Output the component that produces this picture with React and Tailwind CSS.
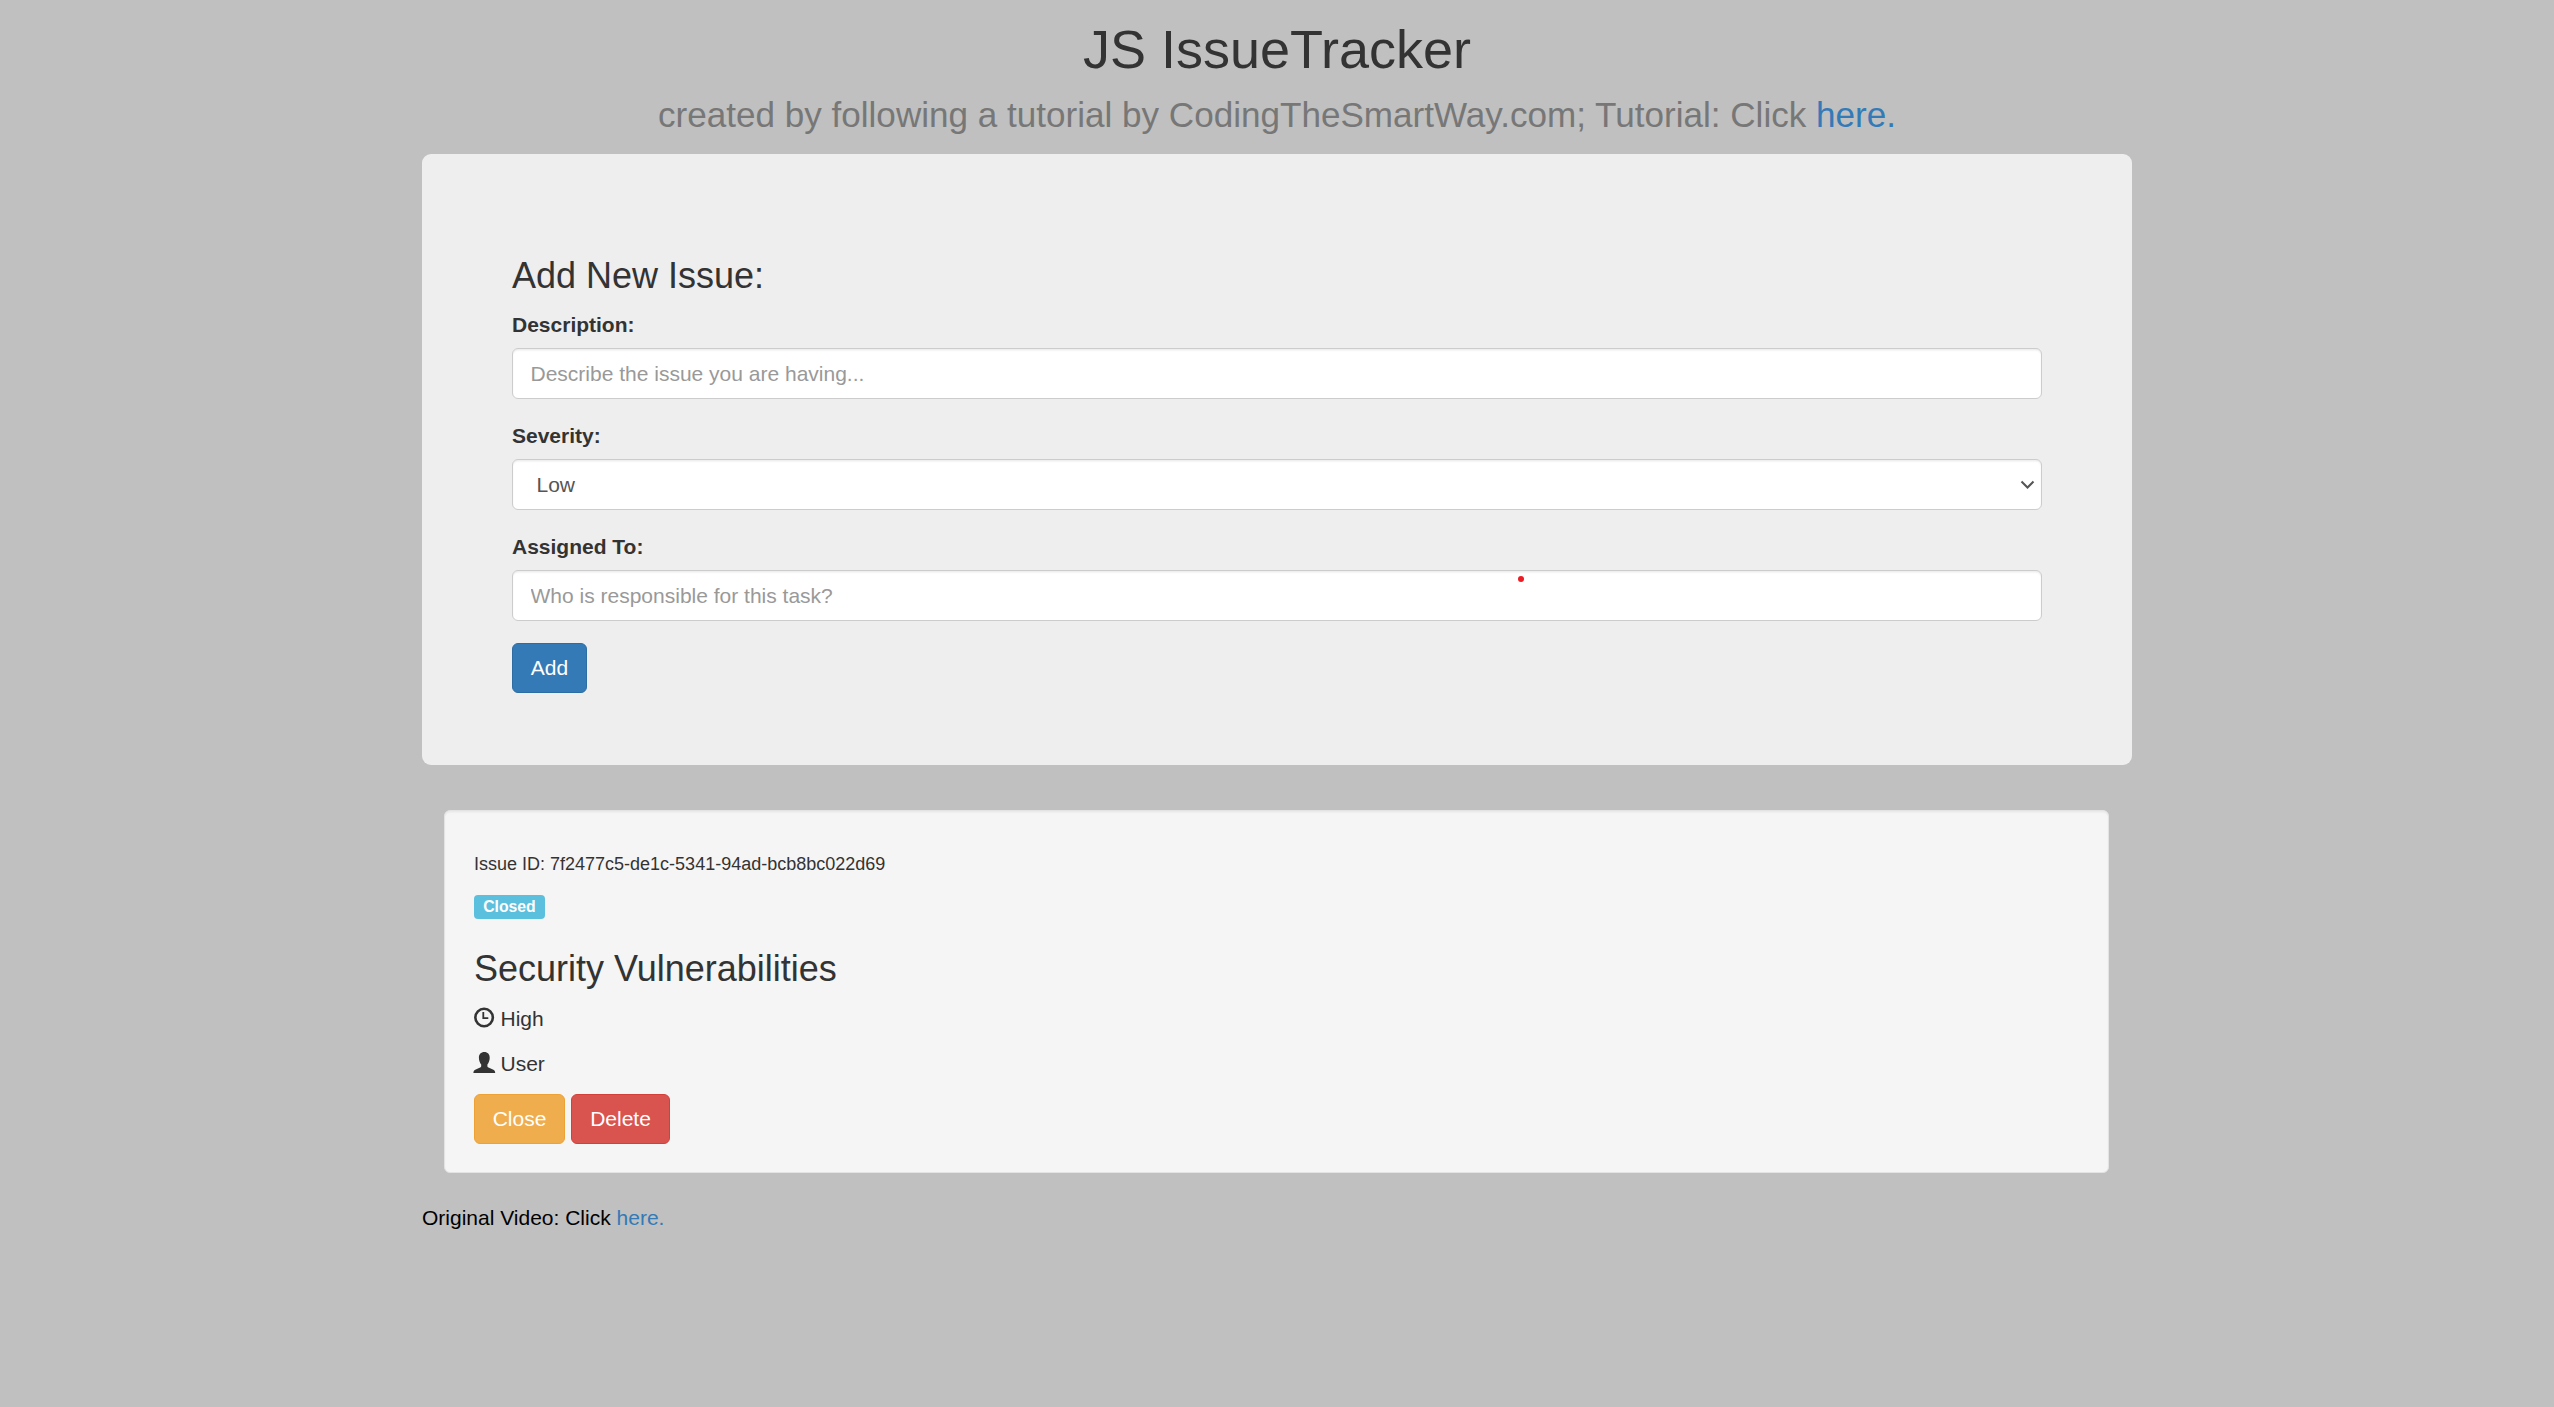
function Field({ label, children }) {
  return (
    <div className="mb-[22.5px]">
      <label className="mb-[8.5px] block h-[29px] leading-[28px] font-bold">{label}</label>
      {children}
    </div>
  );
}

const control =
  "block h-[51px] w-full rounded-[6px] border border-[#ccc] bg-white px-[17.500px] py-[9px] text-[21px] leading-[30px] text-[#555] shadow-[inset_0_1.5px_1.5px_rgba(0,0,0,0.075)] placeholder:text-[#999] placeholder:opacity-100 outline-none";

const button = "h-[50px] rounded-[6px] border text-center leading-[30px] text-white";

function ClockIcon() {
  return (
    <svg className="mt-[3px] h-[21px] w-[21px]" viewBox="0 0 21 21" fill="none" stroke="#333">
      <circle cx="10.1" cy="10.5" r="8.75" strokeWidth="2.6" />
      <path d="M9.300 5v6.200h5" strokeWidth="1.8" />
    </svg>
  );
}

function UserIcon() {
  return (
    <svg className="mt-[3px] h-[21px] w-[21px] overflow-visible" viewBox="0 0 21 21" fill="#333">
      <path d="M10.300 0c3.400 0 5.400 2.200 5.400 5.800 0 2.900-1 5.200-2.300 6.600v1.500c0 .8.300 1.200 1.100 1.600l4.900 2.200c1.200.6 1.700 1.500 1.800 3.200H-.6c.1-1.700.6-2.600 1.800-3.200l4.900-2.200c.8-.4 1.100-.8 1.100-1.600v-1.500C5.900 11 4.900 8.700 4.900 5.800 4.900 2.200 6.900 0 10.300 0z" />
    </svg>
  );
}

export default function App() {
  return (
    <div className="min-h-screen bg-[#c0c0c0] pt-[20px] font-['Liberation_Sans',Arial,sans-serif] text-[21px] leading-[30px] text-[#333]">
      <main className="mx-auto w-[1710px]">
        <h1 className="mb-[15px] text-center text-[54px] leading-[59.5px]">
          <span className="block">JS IssueTracker</span>
          <small className="mt-[6px] block h-[53.5px] text-[35.1px] leading-[58px] text-[#777]">
            created by following a tutorial by CodingTheSmartWay.com; Tutorial: Click{" "}
            <a href="#" className="text-[#337ab7]">here.</a>
          </small>
        </h1>

        <section className="relative h-[611px] rounded-[9px] bg-[#eee] px-[90px] pt-[102px]">
          <h3 className="mb-[15px] text-[36px] leading-[39.6px]">Add New Issue:</h3>
          <form>
            <Field label="Description:">
              <input type="text" className={control} placeholder="Describe the issue you are having..." />
            </Field>
            <Field label="Severity:">
              <div className={`${control} flex items-center justify-between pl-[23.5px] pr-[6px]`}>
                <span>Low</span>
                <svg className="h-[15px] w-[15px]" viewBox="0 0 15 15" fill="none" stroke="#555" strokeWidth="2">
                  <path d="M1.500 4.500l6 6 6-6" />
                </svg>
              </div>
            </Field>
            <Field label="Assigned To:">
              <input type="text" className={control} placeholder="Who is responsible for this task?" />
            </Field>
            <button type="button" className={`${button} -mt-px block w-[75px] border-[#2e6da4] bg-[#337ab7]`}>
              Add
            </button>
          </form>
          <span className="absolute left-[1096px] top-[422px] h-[6px] w-[6px] rounded-full bg-[#ed1c24]" />
        </section>

        <section className="mr-[23px] ml-[22px] mt-[45px] rounded-[6px] border border-[#e3e3e3] bg-[#f5f5f5] px-[29px] pt-[43.5px] pb-[28.5px] shadow-[inset_0_1.5px_1.5px_rgba(0,0,0,0.05)]">
          <h6 className="mb-[15px] text-[18px] leading-[19.8px]">
            Issue ID: 7f2477c5-de1c-5341-94ad-bcb8bc022d69
          </h6>
          <p className="mb-[30px] flex h-[30px] items-end">
            <span className="h-[24px] w-[71px] rounded-[4px] bg-[#5bc0de] text-center text-[15.75px] leading-[23px] font-bold text-white">
              Closed
            </span>
          </p>
          <h3 className="mb-[15px] text-[36px] leading-[39.6px]">Security Vulnerabilities</h3>
          <p className="mb-[15px] flex gap-[5.500px]">
            <ClockIcon />
            High
          </p>
          <p className="mb-[15px] flex gap-[5.500px]">
            <UserIcon />
            User
          </p>
          <div className="flex gap-[6px]">
            <button type="button" className={`${button} w-[91px] border-[#eea236] bg-[#f0ad4e]`}>Close</button>
            <button type="button" className={`${button} w-[99px] border-[#d43f3a] bg-[#d9534f]`}>Delete</button>
          </div>
        </section>

        <p className="mt-[30px] text-black">
          Original Video: Click <a href="#" className="text-[#337ab7]">here.</a>
        </p>
      </main>
    </div>
  );
}
